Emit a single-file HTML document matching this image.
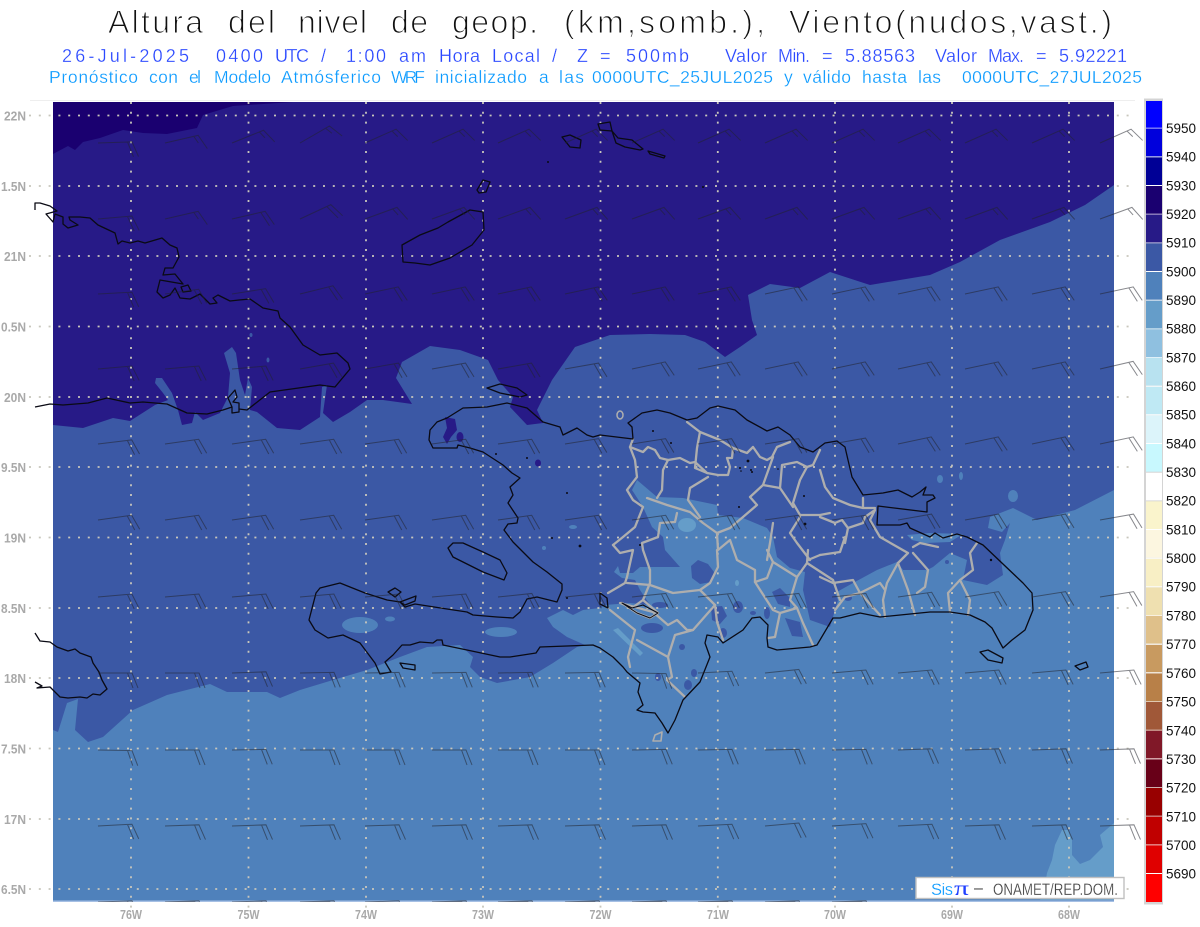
<!DOCTYPE html>
<html lang="es"><head><meta charset="utf-8"><title>Altura del nivel de geop.</title>
<style>
html,body{margin:0;padding:0;background:#fff;width:1200px;height:927px;overflow:hidden}
svg{display:block;font-family:"Liberation Sans",sans-serif}
.t1{font-size:32px;fill:#111;stroke:#fff;stroke-width:1.1px}
.t2{font-size:18px;fill:#2a48ff;stroke:#fff;stroke-width:.25px}
.t3{font-size:17.5px;fill:#0a9aff;stroke:#fff;stroke-width:.25px}
.ax{font-size:13px;font-weight:bold;fill:#a9a9a9}
.cb{font-size:13.5px;fill:#111}
.coast{fill:none;stroke:#0a0a14;stroke-width:1.3;stroke-linejoin:round}
.border{fill:none;stroke:#aeaeae;stroke-width:2.3;stroke-linejoin:round;stroke-linecap:round}
.grid{stroke:#c8c6bc;stroke-width:1.8;stroke-dasharray:2 7.8;fill:none}
</style></head><body>
<svg width="1200" height="927" viewBox="0 0 1200 927" xmlns="http://www.w3.org/2000/svg">
<defs>
<g id="a" fill="none" stroke="#22242e" stroke-opacity=".55" stroke-width="1"><path d="M0 0H34l6 15M29.5 0l5.5 15"/></g>
<g id="c" fill="none" stroke="#22242e" stroke-opacity=".55" stroke-width="1"><path d="M0 0H34l6 15M29.5 0l3 7.5"/></g>
<clipPath id="mapclip"><rect x="0" y="0" width="1200" height="902"/></clipPath>
</defs>

<!-- titles -->
<g class="t1">
<text x="108" y="33" textLength="95">Altura</text>
<text x="228" y="33" textLength="47">del</text>
<text x="298" y="33" textLength="69">nivel</text>
<text x="391" y="33" textLength="37">de</text>
<text x="452" y="33" textLength="86">geop.</text>
<text x="564" y="33" textLength="201">(km,somb.),</text>
<text x="789" y="33" textLength="323">Viento(nudos,vast.)</text>
</g>
<g class="t2">
<text x="62" y="62" textLength="127">26-Jul-2025</text>
<text x="216" y="62" textLength="47">0400</text>
<text x="275" y="62" textLength="34">UTC</text>
<text x="321" y="62">/</text>
<text x="346" y="62" textLength="40">1:00</text>
<text x="399" y="62" textLength="27">am</text>
<text x="439" y="62" textLength="41">Hora</text>
<text x="492" y="62" textLength="48">Local</text>
<text x="552" y="62">/</text>
<text x="577" y="62">Z</text>
<text x="600" y="62">=</text>
<text x="626" y="62" textLength="63">500mb</text>
<text x="725" y="62" textLength="42">Valor</text>
<text x="778" y="62" textLength="32">Min.</text>
<text x="822" y="62">=</text>
<text x="845" y="62" textLength="70">5.88563</text>
<text x="935" y="62" textLength="42">Valor</text>
<text x="988" y="62" textLength="36">Max.</text>
<text x="1036" y="62">=</text>
<text x="1059" y="62" textLength="68">5.92221</text>
</g>
<g class="t3">
<text x="49" y="83" textLength="89">Pronóstico</text>
<text x="149" y="83" textLength="29">con</text>
<text x="189" y="83" textLength="12">el</text>
<text x="214" y="83" textLength="57">Modelo</text>
<text x="281" y="83" textLength="100">Atmósferico</text>
<text x="391" y="83" textLength="34">WRF</text>
<text x="435" y="83" textLength="92">inicializado</text>
<text x="539" y="83">a</text>
<text x="559" y="83" textLength="25">las</text>
<text x="592" y="83" textLength="181">0000UTC_25JUL2025</text>
<text x="784" y="83">y</text>
<text x="803" y="83" textLength="48">válido</text>
<text x="862" y="83" textLength="45">hasta</text>
<text x="918" y="83" textLength="23">las</text>
<text x="962" y="83" textLength="180">0000UTC_27JUL2025</text>
</g>

<line x1="30" y1="100.5" x2="1135" y2="100.5" stroke="#eeeeee"/>

<!-- shaded map -->
<rect x="53" y="102" width="1061" height="799" fill="#4f81bb"/>
<rect x="53" y="900.5" width="1061" height="1.5" fill="#a6c0e4"/>
<path fill="#659dc9" d="M1114 823L1100 835 1103 847 1090 860 1080 864 1072 855 1072 840 1068 830 1062 830 1055 845 1052 860 1047 873 1045 885 1040 900H1114Z"/>
<path fill="#3b58a5" d="M53 102H1114V490L1075 510 1037 520 1013 508 990 517 988 528 1002 532 1010 523 1005 540 1000 553 1003 575 987 585 963 580 967 560 950 553 933 567 927 570 903 570 897 562 877 570 853 583 835 593 838 600 830 627 810 620 803 590 805 572 790 568 777 557 773 537 767 528 743 518 718 515 717 505 683 498 657 497 637 480 632 490 643 507 652 527 663 537 665 550 680 567 640 567 633 573 620 573 618 566 614 572 622 578 635 580 640 590 650 605 630 603 605 605 600 608 583 610 573 615 563 610 557 613 547 618 553 627 567 637 585 645 577 647 553 663 530 677 497 683 480 677 470 667 473 657 460 645 427 647 400 657 367 670 333 680 300 690 280 698 267 692 227 692 210 684 167 695 133 710 103 737 88 742 75 730 78 699 67 703 58 732 53 730Z"/>
<g fill="#4f81bb">
<ellipse cx="360" cy="625" rx="18" ry="8"/><ellipse cx="390" cy="619" rx="5" ry="2.5"/><ellipse cx="501" cy="632" rx="16" ry="5"/>
<path d="M907 535L930 533 963 534 950 542 925 543 912 540Z"/>
<ellipse cx="940" cy="479" rx="3" ry="4"/><ellipse cx="961" cy="476" rx="2" ry="4"/><ellipse cx="1013" cy="496" rx="5" ry="6"/><ellipse cx="573" cy="527" rx="4" ry="2"/><ellipse cx="544" cy="548" rx="2" ry="2"/>
</g>
<g fill="#3b58a5">
<path d="M691 566L698 560 708 564 714 572 711 582 700 584 692 578Z"/><ellipse cx="652" cy="628" rx="11" ry="5"/><path d="M711 607L722 606 727 616 720 624 712 620Z"/><ellipse cx="738" cy="607" rx="5" ry="6"/><path d="M772 592L780 588 790 598 790 607 778 604Z"/><path d="M785 618L800 622 803 637 792 636Z"/><ellipse cx="660" cy="605" rx="8" ry="3"/><ellipse cx="723" cy="633" rx="4" ry="5"/><ellipse cx="682" cy="647" rx="3" ry="3"/><ellipse cx="694" cy="673" rx="3" ry="4"/><ellipse cx="658" cy="677" rx="3" ry="4"/><ellipse cx="688" cy="685" rx="4" ry="5"/><ellipse cx="753" cy="613" rx="3" ry="2"/><ellipse cx="767" cy="613" rx="3" ry="6"/><ellipse cx="947" cy="562" rx="2" ry="2"/><ellipse cx="848" cy="598" rx="4" ry="3"/>
</g>
<g fill="#659dc9">
<ellipse cx="687" cy="525" rx="9" ry="7"/><path d="M613 630L618 628 643 653 640 656Z"/><ellipse cx="737" cy="583" rx="2" ry="3"/>
</g>
<path fill="#271a87" d="M53 102H1114V185L1085 205 1050 222 1000 240 960 262 930 275 900 280 870 285 830 272 800 288 770 284 748 295 752 320 757 335 740 347 725 357 705 342 685 335 650 334 610 335 575 347 552 380 537 410 543 423 527 425 510 407 513 397 498 380 488 360 460 350 430 346 402 362 396 378 412 404 383 400 367 400 350 412 333 422 323 413 327 385 322 387 320 417 300 430 277 428 257 412 250 410 252 387 248 378 245 395 240 380 236 353 232 347 224 353 230 373 228 397 220 413 203 420 195 412 192 423 182 425 178 410 172 393 162 378 156 378 155 383 163 393 168 400 155 405 130 421 113 418 83 428 53 425Z"/>
<g fill="#271a87">
<path d="M445 417L455 419 457 430 451 437 447 444 443 437 447 428Z"/><ellipse cx="460" cy="437" rx="3.5" ry="5"/><ellipse cx="538" cy="463" rx="3" ry="3.5"/>
</g>
<g fill="#3b58a5"><ellipse cx="251" cy="335" rx="1.5" ry="2"/><ellipse cx="268" cy="360" rx="1.5" ry="2.5"/></g>
<path fill="#1a0070" d="M53 102H293L233 106 203 115 197 128 167 134 143 133 123 130 100 138 83 142 75 150 68 146 53 154Z"/>

<!-- grid -->
<g class="grid">
<path d="M131 102V908M248.5 102V908M366 102V908M483 102V908M600.5 102V908M717.8 102V908M835 102V908M952 102V908M1069 102V908"/>
<path d="M29 115.5H1136M29 186H1136M29 256H1136M29 326.5H1136M29 397H1136M29 467H1136M29 537.5H1136M29 608H1136M29 678H1136M29 748.5H1136M29 819H1136M29 889H1136"/>
</g>

<!-- provincial borders -->
<g class="border">
<path d="M633 439L630 447 635 460 637 477 627 490 633 500 643 507 635 527 623 537 613 545"/>
<path d="M613 545L620 553 633 550 627 577 625 583 608 593"/>
<path d="M610 610L635 630 628 657 630 667"/>
<path d="M630 447L643 452 648 447 655 450 660 458 668 460 680 458 690 463 695 462 707 473 718 475 728 475 730 467 727 458 732 458 733 448 747 453 753 447 760 457 767 460 772 457 777 447 790 442"/>
<path d="M687 422L700 432 720 440 733 448"/>
<path d="M700 432L697 448 695 468 707 473"/>
<path d="M668 460L663 470 662 490 657 498"/>
<path d="M647 498L667 505 690 512 703 523 717 533 730 528 743 517 757 505 750 497 763 485 773 457"/>
<path d="M763 485L780 488 782 465 797 462 807 467 813 465 820 450"/>
<path d="M807 467L800 480 793 503 800 515 820 515 830 513"/>
<path d="M780 488L793 507"/>
<path d="M708 477L690 488 688 500 700 517"/>
<path d="M677 513L675 522 660 523 658 537 642 543 643 550 650 570 650 583 643 600"/>
<path d="M717 533L718 550 730 540 737 560 755 570 755 582 773 610 780 613 775 637 768 638"/>
<path d="M773 523L770 543 767 560"/>
<path d="M800 517L790 533 797 543 810 560"/>
<path d="M627 583L650 585 673 593 700 590 715 605 717 622 723 640"/>
<path d="M717 550L718 567 710 583 700 590"/>
<path d="M755 582L767 578 773 562 767 550"/>
<path d="M773 562L797 577 807 563 808 550"/>
<path d="M797 577L790 600 797 608 780 613"/>
<path d="M797 608L803 623 813 645"/>
<path d="M807 563L833 580 840 600"/>
<path d="M715 605L693 630 675 635 668 657 672 677 667 680 685 697"/>
<path d="M693 630L687 630 677 620 668 625 653 612 620 603 632 608 643 600 658 613 650 618 637 613 622 603"/>
<path d="M668 657L637 640"/>
<path d="M820 470L825 487 833 498 850 505 863 508 875 508M863 498L863 508"/>
<path d="M820 517L835 523 842 520 848 528 863 523 865 517 875 510 870 520 880 537 908 553 898 563"/>
<path d="M898 563L887 583 883 600 885 617"/>
<path d="M898 563L908 590 915 615"/>
<path d="M913 547L920 543 938 547M913 553L928 570 925 587 917 593"/>
<path d="M977 543L970 553 973 570 960 580 948 593 950 612"/>
<path d="M960 580L970 600 968 615"/>
<path d="M820 577L833 583 853 580 860 593 880 583 885 590"/>
<path d="M860 593L845 597 835 610"/>
<path d="M860 593L880 615"/>
<path d="M845 537L840 552 820 555M848 528L845 543"/>
<path d="M820 555L808 560"/>
<ellipse cx="620" cy="415" rx="3" ry="4" stroke-width="1.5"/>
<path d="M655 735L662 732 661 741 653 741Z" stroke-width="1.6"/>
</g>

<!-- coast -->
<g class="coast">
<path d="M35 210L35 203 40 203 50 206 57 211 46 214 53 222 55 214 63 217 63 224 68 228 78 225 70 220 69 217 80 217 90 218 98 225 115 233 118 244 122 241 130 243 138 241 145 243 162 238 170 245 177 248 179 257 173 268 165 268 163 275 175 274 183 284 160 280 157 292 163 298 170 295 175 288 180 298 190 299 200 294 203 297 210 304 217 303 213 298 218 295 230 301 239 300 250 299 263 308 278 311 280 318 290 327 303 345 320 355 337 353 348 363 350 369 335 387 320 385 270 392 247 410 239 409 239 403 233 402 237 397 235 390 228 398 232 407 232 413 239 412 239 403M232 407L223 410 207 414 187 413 167 404 143 402 130 403 107 398 88 403 63 405 50 404 35 407"/>
<path d="M181 287L188 285 191 291 183 292Z"/>
<path d="M35 633L40 641 50 642 57 647 68 651 75 649 80 653 91 657 93 663 99 672 102 680 107 689 100 695 93 694 87 698 80 697 68 698 60 697 50 687 37 688 42 686 35 682"/>
<path d="M403 262L402 245 420 235 438 228 448 222 470 210 483 212 484 230 472 245 450 258 430 265 415 263Z"/>
<path d="M477 190L483 180 490 182 486 192 479 193Z"/>
<path d="M562 137L570 135 581 140 580 148 570 147Z"/>
<path d="M598 124L610 122 612 131 600 130Z"/>
<path d="M612 131L618 138 632 140 643 149 640 150 625 147 616 143Z"/>
<path d="M648 151L665 156 664 158 650 154Z"/>
<path d="M487 388L500 384 517 388 527 395 520 397 500 393Z"/>
<path d="M1075 666L1086 662 1088 667 1080 670Z"/>
<path d="M429 440L430 430 437 422 447 418 463 408 487 407 507 403 527 408 543 422 560 427 563 435 577 428 587 435 593 437 600 435 633 439 632 427 628 423 642 413 657 410 670 413 687 420 697 418 710 408 718 406 735 410 747 420 767 431 778 427 790 435 800 447 813 452 825 443 837 441 845 447 848 460 852 477 863 495 883 493 898 490 912 497 920 492 926 487 923 495 933 495 935 498 927 502 927 512 878 506 877 525 900 525 907 523 910 528 930 537 935 533 943 538 957 534 967 537 983 545 1023 583 1032 593 1033 610 1025 630 1012 640 1003 648 992 628 985 622 970 615 950 612 930 612 880 617 860 613 840 618 833 618 817 645 810 647 777 650 768 647 767 638 768 625 760 617 752 618 743 630 723 643 718 637 707 635 705 643 710 657 700 682 683 700 675 720 668 733 662 723 655 713 643 712 637 710 643 705 638 692 640 683 627 672 623 667 613 657 600 648 593 645 567 646 540 647 536 653 510 657 500 657 467 650 443 645 442 640 437 640 433 643 420 642 410 645 402 645 393 655 385 662 391 672 380 674 375 663 360 643 343 635 328 638 315 630 309 620 316 593 320 588 340 583 350 587 365 593 387 600 400 602 405 607 415 604 447 609 467 612 473 615 497 617 513 618 520 612 527 599 537 597 557 602 562 590 562 584 547 572 533 562 513 542 504 530 508 524 517 523 518 518 508 503 513 495 510 487 520 478 512 473 503 465 483 452 470 448 458 445 457 448 433 448Z"/>
<path d="M448 548L453 543 463 543 483 552 500 560 507 573 504 580 483 572 463 562 453 557Z"/>
<path d="M400 663L415 665 415 670 403 668Z"/>
<path d="M388 592L395 588 401 592 395 597Z"/>
<path d="M400 602L416 596 415 601 405 605Z"/>
<path d="M980 652L988 650 1003 658 1002 663 988 660Z"/>
<path d="M600 593L607 598 608 608 600 604Z"/>
<path d="M622 603L632 608 643 605 658 613 650 618 637 613Z" stroke-width="1"/>
</g>
<g fill="#0a0a14">
<circle cx="653" cy="431" r="1"/><circle cx="671" cy="443" r="1"/><circle cx="748" cy="461" r="1.4"/><circle cx="740" cy="468" r="1"/><circle cx="741" cy="471" r=".8"/><circle cx="751" cy="470" r="1"/><circle cx="752" cy="472" r="1"/><circle cx="778" cy="469" r=".8"/><circle cx="804" cy="496" r="1"/><circle cx="739" cy="507" r="1"/><circle cx="640" cy="545" r="1"/><circle cx="805" cy="524" r="1.4"/><circle cx="496" cy="454" r="1"/><circle cx="527" cy="458" r="1"/><circle cx="567" cy="493" r="1"/><circle cx="552" cy="538" r="1"/><circle cx="580" cy="546" r="1.4"/><circle cx="567" cy="598" r="1"/><circle cx="548" cy="162" r="1"/><circle cx="703" cy="187" r="1"/><circle cx="991" cy="560" r="1.2"/>
</g>

<!-- wind barbs -->
<g clip-path="url(#mapclip)">
<g transform="translate(0,143)"><use href="#a" transform="translate(98) rotate(-2)"/><use href="#c" transform="translate(165) rotate(-13)"/><use href="#c" transform="translate(232) rotate(-22)"/><use href="#c" transform="translate(300) rotate(-30)"/><use href="#c" transform="translate(365) rotate(-24)"/><use href="#c" transform="translate(432) rotate(-24)"/><use href="#c" transform="translate(498) rotate(-24)"/><use href="#c" transform="translate(565) rotate(-24)"/><use href="#c" transform="translate(632) rotate(-24)"/><use href="#c" transform="translate(698) rotate(-24)"/><use href="#c" transform="translate(765) rotate(-24)"/><use href="#c" transform="translate(832) rotate(-24)"/><use href="#c" transform="translate(898) rotate(-24)"/><use href="#c" transform="translate(965) rotate(-24)"/><use href="#c" transform="translate(1032) rotate(-24)"/><use href="#c" transform="translate(1100) rotate(-24)"/></g>
<g transform="translate(0,219)"><use href="#a" transform="translate(98) rotate(-5)"/><use href="#c" transform="translate(165) rotate(-13)"/><use href="#a" transform="translate(232) rotate(-13)"/><use href="#a" transform="translate(300) rotate(-25)"/><use href="#c" transform="translate(365) rotate(-20)"/><use href="#c" transform="translate(432) rotate(-20)"/><use href="#c" transform="translate(498) rotate(-20)"/><use href="#c" transform="translate(565) rotate(-20)"/><use href="#c" transform="translate(632) rotate(-20)"/><use href="#c" transform="translate(698) rotate(-20)"/><use href="#c" transform="translate(765) rotate(-20)"/><use href="#c" transform="translate(832) rotate(-20)"/><use href="#c" transform="translate(898) rotate(-20)"/><use href="#c" transform="translate(965) rotate(-20)"/><use href="#c" transform="translate(1032) rotate(-20)"/><use href="#c" transform="translate(1100) rotate(-20)"/></g>
<g transform="translate(0,294)"><use href="#a" transform="translate(98) rotate(-3)"/><use href="#a" transform="translate(165) rotate(-8)"/><use href="#a" transform="translate(232) rotate(-9)"/><use href="#a" transform="translate(300) rotate(-14)"/><use href="#a" transform="translate(365) rotate(-12)"/><use href="#a" transform="translate(432) rotate(-12)"/><use href="#a" transform="translate(498) rotate(-12)"/><use href="#a" transform="translate(565) rotate(-12)"/><use href="#a" transform="translate(632) rotate(-12)"/><use href="#a" transform="translate(698) rotate(-12)"/><use href="#a" transform="translate(765) rotate(-12)"/><use href="#a" transform="translate(832) rotate(-12)"/><use href="#a" transform="translate(898) rotate(-12)"/><use href="#a" transform="translate(965) rotate(-12)"/><use href="#a" transform="translate(1032) rotate(-12)"/><use href="#a" transform="translate(1100) rotate(-12)"/></g>
<g transform="translate(0,369)"><use href="#a" transform="translate(98) rotate(-5)"/><use href="#a" transform="translate(165) rotate(-5)"/><use href="#a" transform="translate(232) rotate(-5)"/><use href="#a" transform="translate(300) rotate(-10)"/><use href="#a" transform="translate(365) rotate(-10)"/><use href="#a" transform="translate(432) rotate(-10)"/><use href="#a" transform="translate(498) rotate(-10)"/><use href="#a" transform="translate(565) rotate(-10)"/><use href="#a" transform="translate(632) rotate(-12)"/><use href="#a" transform="translate(698) rotate(-12)"/><use href="#a" transform="translate(765) rotate(-12)"/><use href="#a" transform="translate(832) rotate(-12)"/><use href="#a" transform="translate(898) rotate(-12)"/><use href="#a" transform="translate(965) rotate(-12)"/><use href="#a" transform="translate(1032) rotate(-12)"/><use href="#a" transform="translate(1100) rotate(-13)"/></g>
<g transform="translate(0,444)"><use href="#a" transform="translate(98) rotate(-7)"/><use href="#a" transform="translate(165) rotate(-8)"/><use href="#a" transform="translate(232) rotate(-8)"/><use href="#a" transform="translate(300) rotate(-8)"/><use href="#a" transform="translate(365) rotate(-8)"/><use href="#a" transform="translate(432) rotate(-8)"/><use href="#a" transform="translate(498) rotate(-8)"/><use href="#a" transform="translate(565) rotate(-9)"/><use href="#a" transform="translate(632) rotate(-9)"/><use href="#a" transform="translate(698) rotate(-9)"/><use href="#a" transform="translate(765) rotate(-9)"/><use href="#a" transform="translate(832) rotate(-10)"/><use href="#a" transform="translate(898) rotate(-12)"/><use href="#a" transform="translate(965) rotate(-12)"/><use href="#a" transform="translate(1032) rotate(-12)"/><use href="#a" transform="translate(1100) rotate(-12)"/></g>
<g transform="translate(0,520)"><use href="#a" transform="translate(98) rotate(-8)"/><use href="#a" transform="translate(165) rotate(-8)"/><use href="#a" transform="translate(232) rotate(-8)"/><use href="#a" transform="translate(300) rotate(-8)"/><use href="#a" transform="translate(365) rotate(-8)"/><use href="#a" transform="translate(432) rotate(-8)"/><use href="#a" transform="translate(498) rotate(-8)"/><use href="#a" transform="translate(565) rotate(-8)"/><use href="#a" transform="translate(632) rotate(-8)"/><use href="#a" transform="translate(698) rotate(-8)"/><use href="#a" transform="translate(765) rotate(-8)"/><use href="#a" transform="translate(832) rotate(-8)"/><use href="#a" transform="translate(898) rotate(-10)"/><use href="#a" transform="translate(965) rotate(-10)"/><use href="#a" transform="translate(1032) rotate(-10)"/><use href="#a" transform="translate(1100) rotate(-10)"/></g>
<g transform="translate(0,597)"><use href="#a" transform="translate(98) rotate(-5)"/><use href="#a" transform="translate(165) rotate(-5)"/><use href="#a" transform="translate(232) rotate(-5)"/><use href="#a" transform="translate(300) rotate(-5)"/><use href="#a" transform="translate(365) rotate(-5)"/><use href="#a" transform="translate(432) rotate(-5)"/><use href="#a" transform="translate(498) rotate(-6)"/><use href="#a" transform="translate(565) rotate(-6)"/><use href="#a" transform="translate(632) rotate(-6)"/><use href="#a" transform="translate(698) rotate(-6)"/><use href="#a" transform="translate(765) rotate(-6)"/><use href="#a" transform="translate(832) rotate(-6)"/><use href="#a" transform="translate(898) rotate(-8)"/><use href="#a" transform="translate(965) rotate(-9)"/><use href="#a" transform="translate(1032) rotate(-9)"/><use href="#a" transform="translate(1100) rotate(-9)"/></g>
<g transform="translate(0,673)"><use href="#a" transform="translate(98) rotate(0)"/><use href="#a" transform="translate(165) rotate(0)"/><use href="#a" transform="translate(232) rotate(-2)"/><use href="#a" transform="translate(300) rotate(-1)"/><use href="#a" transform="translate(365) rotate(-1)"/><use href="#a" transform="translate(432) rotate(-1)"/><use href="#a" transform="translate(498) rotate(-1)"/><use href="#a" transform="translate(565) rotate(-1)"/><use href="#a" transform="translate(632) rotate(1)"/><use href="#a" transform="translate(698) rotate(-3)"/><use href="#a" transform="translate(765) rotate(-6)"/><use href="#a" transform="translate(832) rotate(-5)"/><use href="#a" transform="translate(898) rotate(-5)"/><use href="#a" transform="translate(965) rotate(-5)"/><use href="#a" transform="translate(1032) rotate(-5)"/><use href="#a" transform="translate(1100) rotate(-5)"/></g>
<g transform="translate(0,750)"><use href="#a" transform="translate(98) rotate(1)"/><use href="#a" transform="translate(165) rotate(0)"/><use href="#a" transform="translate(232) rotate(-1)"/><use href="#a" transform="translate(300) rotate(0)"/><use href="#a" transform="translate(365) rotate(0)"/><use href="#a" transform="translate(432) rotate(0)"/><use href="#a" transform="translate(498) rotate(0)"/><use href="#a" transform="translate(565) rotate(0)"/><use href="#a" transform="translate(632) rotate(-1)"/><use href="#a" transform="translate(698) rotate(-1)"/><use href="#a" transform="translate(765) rotate(-1)"/><use href="#a" transform="translate(832) rotate(-1)"/><use href="#a" transform="translate(898) rotate(-2)"/><use href="#a" transform="translate(965) rotate(-2)"/><use href="#a" transform="translate(1032) rotate(-2)"/><use href="#a" transform="translate(1100) rotate(-2)"/></g>
<g transform="translate(0,826)"><use href="#a" transform="translate(98) rotate(-3)"/><use href="#a" transform="translate(165) rotate(-2)"/><use href="#a" transform="translate(232) rotate(-2)"/><use href="#a" transform="translate(300) rotate(-2)"/><use href="#a" transform="translate(365) rotate(-2)"/><use href="#a" transform="translate(432) rotate(-2)"/><use href="#a" transform="translate(498) rotate(-2)"/><use href="#a" transform="translate(565) rotate(-2)"/><use href="#a" transform="translate(632) rotate(-2)"/><use href="#a" transform="translate(698) rotate(-3)"/><use href="#a" transform="translate(765) rotate(-5)"/><use href="#a" transform="translate(832) rotate(-4)"/><use href="#a" transform="translate(898) rotate(-3)"/><use href="#a" transform="translate(965) rotate(-2)"/><use href="#a" transform="translate(1032) rotate(-2)"/><use href="#a" transform="translate(1100) rotate(-2)"/></g>
<g transform="translate(0,902)"><use href="#a" transform="translate(98) rotate(-2)"/><use href="#a" transform="translate(165) rotate(-2)"/><use href="#a" transform="translate(232) rotate(-2)"/><use href="#a" transform="translate(300) rotate(-2)"/><use href="#a" transform="translate(365) rotate(-2)"/><use href="#a" transform="translate(432) rotate(-2)"/><use href="#a" transform="translate(498) rotate(-2)"/><use href="#a" transform="translate(565) rotate(-2)"/><use href="#a" transform="translate(632) rotate(-2)"/><use href="#a" transform="translate(698) rotate(-2)"/><use href="#a" transform="translate(765) rotate(-2)"/><use href="#a" transform="translate(832) rotate(-2)"/></g>
</g>

<!-- axis labels -->
<g class="ax">
<text x="4" y="120.5" textLength="22" lengthAdjust="spacingAndGlyphs">22N</text>
<text x="1" y="191" textLength="25" lengthAdjust="spacingAndGlyphs">1.5N</text>
<text x="4" y="261" textLength="22" lengthAdjust="spacingAndGlyphs">21N</text>
<text x="1" y="331.5" textLength="25" lengthAdjust="spacingAndGlyphs">0.5N</text>
<text x="4" y="402" textLength="22" lengthAdjust="spacingAndGlyphs">20N</text>
<text x="1" y="472" textLength="25" lengthAdjust="spacingAndGlyphs">9.5N</text>
<text x="4" y="542.5" textLength="22" lengthAdjust="spacingAndGlyphs">19N</text>
<text x="1" y="613" textLength="25" lengthAdjust="spacingAndGlyphs">8.5N</text>
<text x="4" y="683" textLength="22" lengthAdjust="spacingAndGlyphs">18N</text>
<text x="1" y="753.5" textLength="25" lengthAdjust="spacingAndGlyphs">7.5N</text>
<text x="4" y="824" textLength="22" lengthAdjust="spacingAndGlyphs">17N</text>
<text x="1" y="894" textLength="25" lengthAdjust="spacingAndGlyphs">6.5N</text>
</g>
<g class="ax">
<text x="120" y="919" textLength="22" lengthAdjust="spacingAndGlyphs">76W</text>
<text x="237.5" y="919" textLength="22" lengthAdjust="spacingAndGlyphs">75W</text>
<text x="355" y="919" textLength="22" lengthAdjust="spacingAndGlyphs">74W</text>
<text x="472" y="919" textLength="22" lengthAdjust="spacingAndGlyphs">73W</text>
<text x="589.5" y="919" textLength="22" lengthAdjust="spacingAndGlyphs">72W</text>
<text x="707" y="919" textLength="22" lengthAdjust="spacingAndGlyphs">71W</text>
<text x="824" y="919" textLength="22" lengthAdjust="spacingAndGlyphs">70W</text>
<text x="941" y="919" textLength="22" lengthAdjust="spacingAndGlyphs">69W</text>
<text x="1058" y="919" textLength="22" lengthAdjust="spacingAndGlyphs">68W</text>
</g>

<!-- footer box -->
<rect x="916" y="877.5" width="208" height="21" fill="#fff" stroke="#c0c0c0" stroke-width="1.4"/>
<text x="931" y="895" font-size="16.5" fill="#0a9aff" stroke="#fff" stroke-width=".2" textLength="22">Sis</text>
<text x="954" y="895" font-size="20" font-family="Liberation Serif" fill="#2040ff" textLength="15" lengthAdjust="spacingAndGlyphs">π</text>
<text x="974" y="893" font-size="16" fill="#444">–</text>
<text x="993" y="895" font-size="16.5" fill="#444" stroke="#fff" stroke-width=".2" textLength="125" lengthAdjust="spacingAndGlyphs">ONAMET/REP.DOM.</text>

<!-- colour bar -->
<rect x="1144" y="98.5" width="19" height="806" fill="#d4d4d4"/>
<g>
<rect x="1146" y="101" width="16" height="26.7" fill="#0000ff"/>
<rect x="1146" y="128.7" width="16" height="27.7" fill="#0000dc"/>
<rect x="1146" y="157.3" width="16" height="27.7" fill="#000096"/>
<rect x="1146" y="186" width="16" height="27.7" fill="#1a0070"/>
<rect x="1146" y="214.7" width="16" height="27.7" fill="#271a87"/>
<rect x="1146" y="243.3" width="16" height="27.7" fill="#3b58a5"/>
<rect x="1146" y="272" width="16" height="27.7" fill="#4f81bb"/>
<rect x="1146" y="300.7" width="16" height="27.7" fill="#659dc9"/>
<rect x="1146" y="329.3" width="16" height="27.7" fill="#8fc0e0"/>
<rect x="1146" y="358" width="16" height="27.7" fill="#b8e2f0"/>
<rect x="1146" y="386.7" width="16" height="27.7" fill="#bfe9f4"/>
<rect x="1146" y="415.3" width="16" height="27.7" fill="#dcf4fa"/>
<rect x="1146" y="444" width="16" height="27.7" fill="#c8f8fe"/>
<rect x="1146" y="472.7" width="16" height="27.7" fill="#ffffff"/>
<rect x="1146" y="501.3" width="16" height="27.7" fill="#faf4cc"/>
<rect x="1146" y="530" width="16" height="27.7" fill="#fcf6e0"/>
<rect x="1146" y="558.7" width="16" height="27.7" fill="#f8efc5"/>
<rect x="1146" y="587.3" width="16" height="27.7" fill="#efe0b0"/>
<rect x="1146" y="616" width="16" height="27.7" fill="#dfc08a"/>
<rect x="1146" y="644.7" width="16" height="27.7" fill="#c89a60"/>
<rect x="1146" y="673.3" width="16" height="27.7" fill="#b88048"/>
<rect x="1146" y="702" width="16" height="27.7" fill="#a05838"/>
<rect x="1146" y="730.7" width="16" height="27.7" fill="#801828"/>
<rect x="1146" y="759.3" width="16" height="27.7" fill="#680018"/>
<rect x="1146" y="788" width="16" height="27.7" fill="#980000"/>
<rect x="1146" y="816.7" width="16" height="27.7" fill="#c00000"/>
<rect x="1146" y="845.3" width="16" height="27.7" fill="#e00000"/>
<rect x="1146" y="874" width="16" height="28" fill="#ff0000"/>
</g>
<rect x="1146" y="127.7" width="16" height="1" fill="#8080ff"/><rect x="1146" y="156.3" width="16" height="1" fill="#c0c8f0"/><rect x="1146" y="185" width="16" height="1" fill="#fff"/><rect x="1146" y="213.7" width="16" height="1" fill="#9080c0"/><rect x="1146" y="242.3" width="16" height="1" fill="#a0a0d0"/><rect x="1146" y="271" width="16" height="1" fill="#fff"/><rect x="1146" y="299.7" width="16" height="1" fill="#d0e0f0"/><rect x="1146" y="328.3" width="16" height="1" fill="#c8e0f0"/><rect x="1146" y="357" width="16" height="1" fill="#e0f0f8"/><rect x="1146" y="385.7" width="16" height="1" fill="#fff"/><rect x="1146" y="414.3" width="16" height="1" fill="#fff"/><rect x="1146" y="443" width="16" height="1" fill="#fff"/><rect x="1146" y="529" width="16" height="1" fill="#fff"/><rect x="1146" y="557.7" width="16" height="1" fill="#fff"/><rect x="1146" y="586.3" width="16" height="1" fill="#fff"/><rect x="1146" y="615" width="16" height="1" fill="#f8f0e0"/><rect x="1146" y="643.7" width="16" height="1" fill="#fff"/><rect x="1146" y="672.3" width="16" height="1" fill="#fff"/><rect x="1146" y="701" width="16" height="1" fill="#e0c8b0"/><rect x="1146" y="729.7" width="16" height="1" fill="#d0a090"/><rect x="1146" y="758.3" width="16" height="1" fill="#f0d0d0"/><rect x="1146" y="787" width="16" height="1" fill="#d0b0b0"/><rect x="1146" y="815.7" width="16" height="1" fill="#d08080"/><rect x="1146" y="844.3" width="16" height="1" fill="#f0a0a0"/><rect x="1146" y="873" width="16" height="1" fill="#fff"/>
<g class="cb">
<text x="1166" y="133">5950</text><text x="1166" y="161.7">5940</text><text x="1166" y="190.3">5930</text><text x="1166" y="219">5920</text><text x="1166" y="247.7">5910</text><text x="1166" y="276.3">5900</text><text x="1166" y="305">5890</text><text x="1166" y="333.7">5880</text><text x="1166" y="362.3">5870</text><text x="1166" y="391">5860</text><text x="1166" y="419.7">5850</text><text x="1166" y="448.3">5840</text><text x="1166" y="477">5830</text><text x="1166" y="505.7">5820</text><text x="1166" y="534.3">5810</text><text x="1166" y="563">5800</text><text x="1166" y="591.7">5790</text><text x="1166" y="620.3">5780</text><text x="1166" y="649">5770</text><text x="1166" y="678">5760</text><text x="1166" y="706.7">5750</text><text x="1166" y="735.3">5740</text><text x="1166" y="764">5730</text><text x="1166" y="792.7">5720</text><text x="1166" y="821.3">5710</text><text x="1166" y="850">5700</text><text x="1166" y="878.7">5690</text>
</g>
</svg>
</body></html>
